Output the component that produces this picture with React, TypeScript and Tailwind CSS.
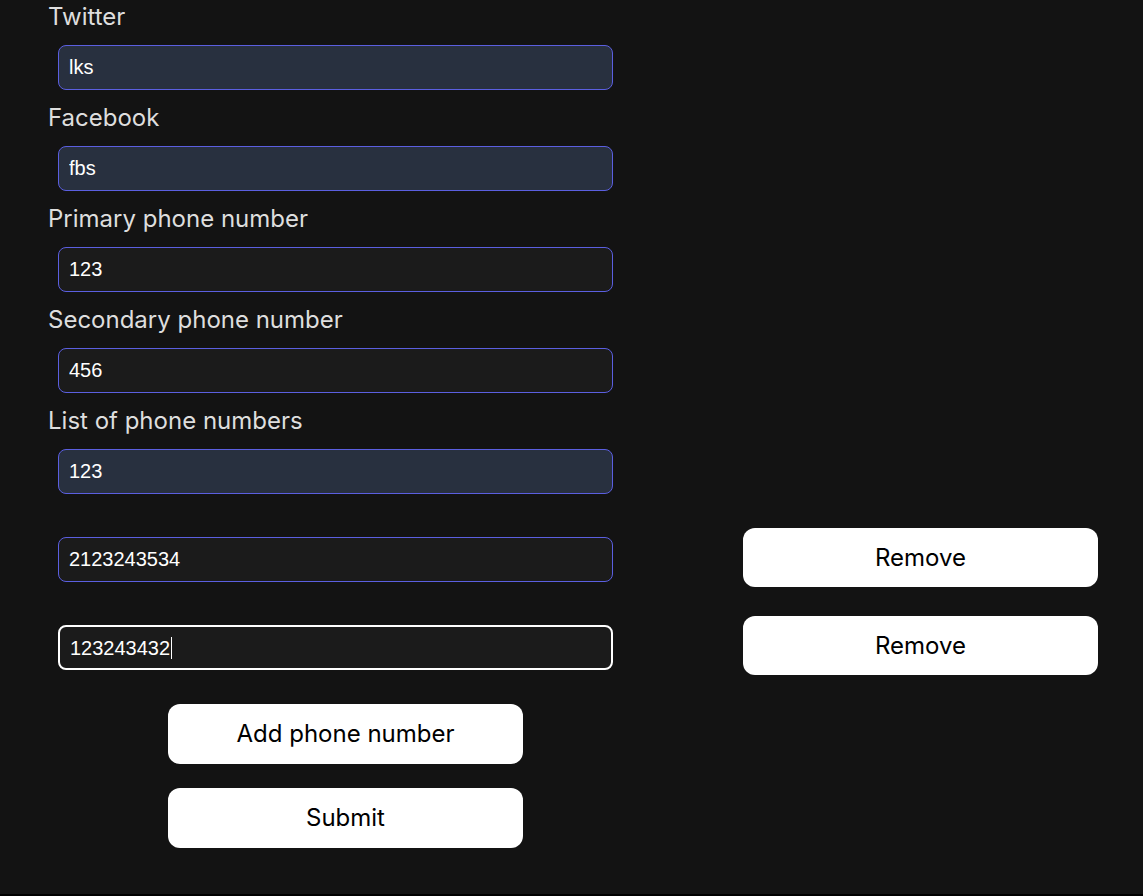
import { FC } from "react";

interface IFieldProps {
  label: string;
  value: string;
  autofill?: boolean;
}

const inputBase =
  "block h-[45px] w-[555px] rounded-lg border px-[10px] text-[20px] text-white outline-none font-['Liberation_Sans',Arial,sans-serif]";

const Field: FC<IFieldProps> = ({ label, value, autofill }) => (
  <div>
    <label className="block h-[28px] leading-[28px] text-[24px] text-[#dedede]">{label}</label>
    <input
      readOnly
      value={value}
      className={`${inputBase} ml-[10px] mt-[14px] mb-[14px] border-[#5b5fe0] ${
        autofill ? "bg-[#28303f]" : "bg-[#1b1b1b]"
      }`}
    />
  </div>
);

const WhiteButton: FC<{ label: string; className?: string }> = ({ label, className }) => (
  <button className={`h-[59px] w-[355px] rounded-xl bg-white text-[24px] text-black ${className ?? ""}`}>
    {label}
  </button>
);

export default function App() {
  return (
    <div className="h-[896px] overflow-hidden bg-black font-['Inter','Noto_Sans',sans-serif]">
      <div className="h-[894px] bg-[#131313] pl-[48px] pt-[3px]">
        <Field label="Twitter" value="lks" autofill />
        <Field label="Facebook" value="fbs" autofill />
        <Field label="Primary phone number" value="123" />
        <Field label="Secondary phone number" value="456" />

        <label className="block h-[28px] leading-[28px] text-[24px] text-[#dedede]">
          List of phone numbers
        </label>
        <input
          readOnly
          value="123"
          className={`${inputBase} ml-[10px] mt-[14px] border-[#5b5fe0] bg-[#28303f]`}
        />

        <div className="mt-[34px] flex items-start gap-[130px] pl-[10px]">
          <input
            readOnly
            value="2123243534"
            className={`${inputBase} mt-[9px] border-[#5b5fe0] bg-[#1b1b1b]`}
          />
          <WhiteButton label="Remove" />
        </div>

        <div className="mt-[29px] flex items-start gap-[130px] pl-[10px]">
          <div
            className={`${inputBase} mt-[9px] flex items-center border-2 border-white bg-[#1b1b1b] px-[9px]`}
          >
            <span>123243432</span>
            <span className="ml-px inline-block h-[22px] w-px bg-white" />
          </div>
          <WhiteButton label="Remove" />
        </div>

        <div className="ml-[120px] flex flex-col">
          <WhiteButton label="Add phone number" className="mt-[29px] h-[60px]" />
          <WhiteButton label="Submit" className="mt-[24px] h-[60px]" />
        </div>
      </div>
    </div>
  );
}
